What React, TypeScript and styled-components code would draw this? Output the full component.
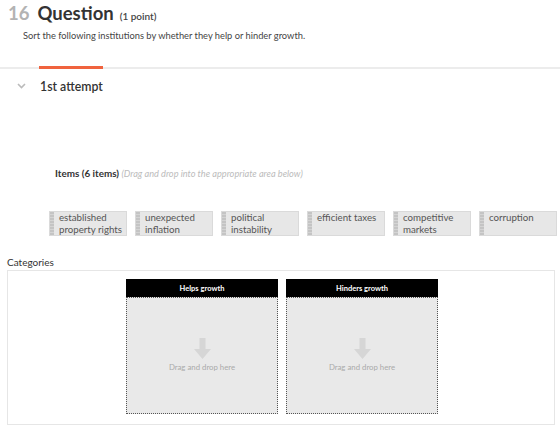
import styled, { createGlobalStyle } from 'styled-components';

const GlobalStyle = createGlobalStyle`
  body {
    margin: 0;
    background: #fff;
    font-family: Lato, 'Open Sans', Arial, sans-serif;
    color: #333;
  }
`;

const items = [
  'established property rights',
  'unexpected inflation',
  'political instability',
  'efficient taxes',
  'competitive markets',
  'corruption',
];

const bins = ['Helps growth', 'Hinders growth'];

function ChevronDown() {
  return (
    <svg width="9" height="6" viewBox="0 0 9 6">
      <path d="M1 1l3.5 3.5L8 1" fill="none" stroke="#bbb" strokeWidth="1.6" />
    </svg>
  );
}

function DownArrow() {
  return (
    <svg width="17" height="21" viewBox="0 0 17 21">
      <path d="M5.5 0h6v11h5.5l-8.5 10-8.5-10h5.5z" fill="#d6d6d6" />
    </svg>
  );
}

export default function App() {
  return (
    <Page>
      <GlobalStyle />
      <Title>
        <Num>16</Num>
        <Heading>Question</Heading>
        <Points>(1 point)</Points>
      </Title>
      <Prompt>Sort the following institutions by whether they help or hinder growth.</Prompt>
      <TabLine>
        <ActiveTab />
      </TabLine>
      <Attempt>
        <ChevronDown />
        <span>1st attempt</span>
      </Attempt>
      <ItemsHeader>
        Items (6 items) <Hint>(Drag and drop into the appropriate area below)</Hint>
      </ItemsHeader>
      <Chips>
        {items.map((t) => (
          <Chip key={t}>
            <Grip />
            <ChipText>{t}</ChipText>
          </Chip>
        ))}
      </Chips>
      <CategoriesLabel>Categories</CategoriesLabel>
      <CategoriesBox>
        {bins.map((b) => (
          <Bin key={b}>
            <BinHead>{b}</BinHead>
            <DropZone>
              <DownArrow />
              <DropText>Drag and drop here</DropText>
            </DropZone>
          </Bin>
        ))}
      </CategoriesBox>
    </Page>
  );
}

const Page = styled.div`
  width: 560px;
  height: 429px;
  overflow: hidden;
`;

const Title = styled.div`
  display: flex;
  align-items: baseline;
  padding: 2px 0 0 8px;
  height: 24px;
`;

const Num = styled.span`
  font-size: 18.5px;
  font-weight: 700;
  color: #b3b3b3;
  margin-right: 8px;
`;

const Heading = styled.span`
  font-size: 18.5px;
  font-weight: 700;
  color: #333;
  margin-right: 6px;
`;

const Points = styled.span`
  font-size: 10px;
  font-weight: 600;
  color: #444;
`;

const Prompt = styled.div`
  font-size: 9.3px;
  color: #444;
  padding: 4px 0 0 23px;
  height: 14px;
`;

const TabLine = styled.div`
  margin-top: 23px;
  height: 2px;
  background: #ececec;
  position: relative;
`;

const ActiveTab = styled.div`
  position: absolute;
  left: 39px;
  top: -1px;
  width: 64px;
  height: 3px;
  background: #f0633e;
`;

const Attempt = styled.div`
  display: flex;
  align-items: center;
  gap: 14px;
  padding: 9px 0 0 17px;
  font-size: 12.3px;
  font-weight: 600;
  color: #333;
  height: 16px;
`;

const ItemsHeader = styled.div`
  margin-top: 73px;
  padding-left: 55px;
  font-size: 9.9px;
  font-weight: 700;
  color: #333;
  height: 14px;
`;

const Hint = styled.span`
  font-style: italic;
  font-weight: 400;
  color: #bbb;
  font-size: 9.2px;
`;

const Chips = styled.div`
  display: flex;
  gap: 8px;
  margin-top: 30px;
  padding-left: 49px;
`;

const Chip = styled.div`
  width: 78px;
  height: 25px;
  box-sizing: border-box;
  display: flex;
  background: #e7e7e7;
  border: 1px solid #dadada;
`;

const Grip = styled.div`
  width: 4px;
  flex-shrink: 0;
  background: repeating-linear-gradient(#c4c4c4 0 2px, #d4d4d4 2px 3px);
`;

const ChipText = styled.div`
  padding: 0 0 0 5px;
  font-size: 9.7px;
  line-height: 11.5px;
  color: #555;
`;

const CategoriesLabel = styled.div`
  margin-top: 20px;
  padding-left: 7px;
  font-size: 10px;
  color: #333;
  height: 14px;
`;

const CategoriesBox = styled.div`
  margin: 0 0 0 7px;
  width: 548px;
  height: 155px;
  box-sizing: border-box;
  border: 1px solid #e6e6e6;
  display: flex;
  justify-content: center;
  gap: 8px;
  padding: 8px 0 10px 2px;
`;

const Bin = styled.div`
  width: 152px;
  display: flex;
  flex-direction: column;
`;

const BinHead = styled.div`
  height: 18px;
  background: #000;
  color: #fff;
  font-size: 7.5px;
  font-weight: 700;
  display: flex;
  align-items: center;
  justify-content: center;
`;

const DropZone = styled.div`
  flex: 1;
  background: #e9e9e9;
  border: 1px dotted #555;
  display: flex;
  flex-direction: column;
  align-items: center;
  justify-content: center;
  gap: 3px;
  padding-bottom: 2px;
`;

const DropText = styled.div`
  font-size: 7.8px;
  color: #aaa;
`;
